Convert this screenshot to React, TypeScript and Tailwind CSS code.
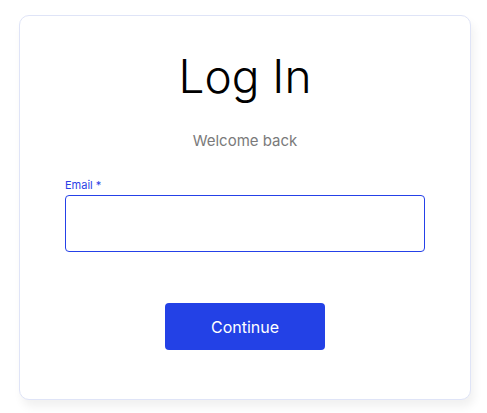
export default function App() {
  return (
    <div className="min-h-[413px] bg-white pt-[15px] pl-[19px] font-['Inter','Liberation_Sans',sans-serif]">
      <div className="w-[452px] h-[385px] rounded-[10px] border border-[#dfe4f7] bg-white shadow-[3px_7px_10px_rgba(0,0,0,0.06)] px-[45px] pt-[32px]">
        <h1 className="h-[56px] text-center text-[46px] leading-[56px] font-[350] text-black">Log In</h1>
        <p className="mt-[27px] h-[20px] text-center text-[15px] leading-[20px] text-[#7a7a7a]">Welcome back</p>
        <label className="mt-[26px] block h-[16px] text-[11px] leading-[16px] text-[#2a3fe6]">Email *</label>
        <input
          type="email"
          className="mt-[2px] block h-[57px] w-[360px] rounded-[4px] border border-[#2541e8] bg-white px-3 outline-none"
        />
        <div className="mt-[51px] flex justify-center">
          <button className="h-[47px] w-[160px] rounded-[4px] bg-[#2341e6] text-[16px] text-white">Continue</button>
        </div>
      </div>
    </div>
  )
}
